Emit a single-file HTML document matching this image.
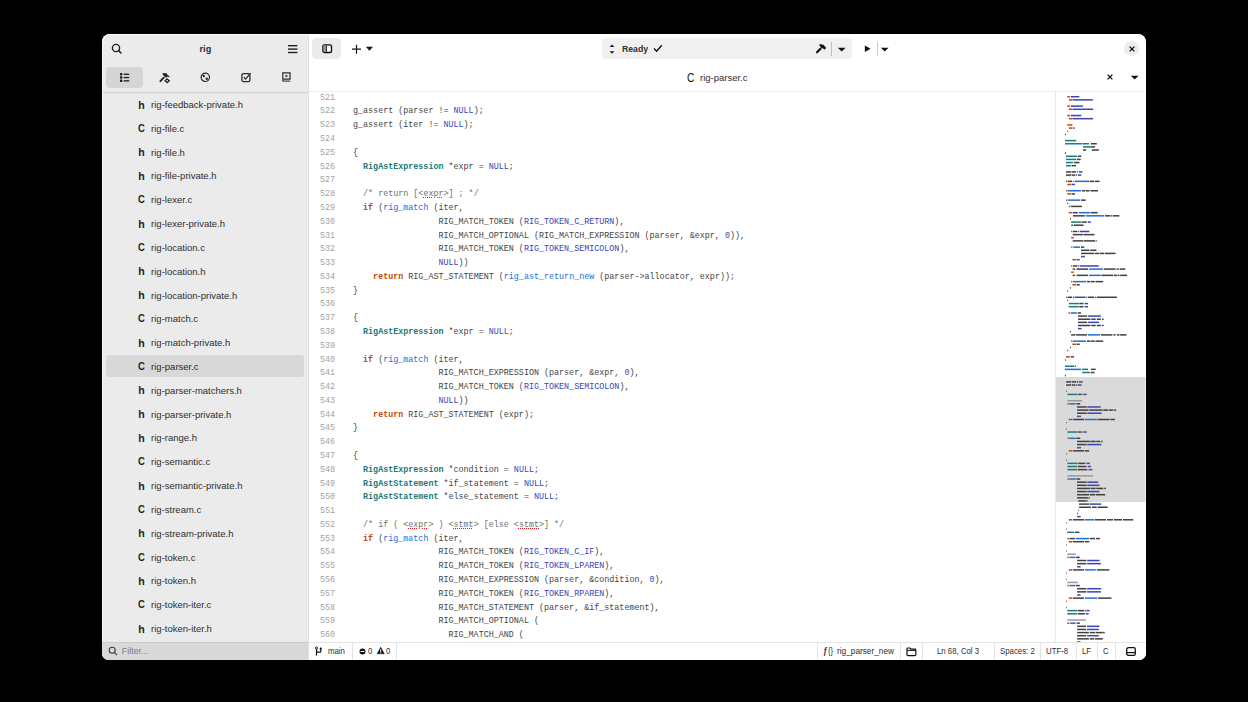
<!DOCTYPE html>
<html><head><meta charset="utf-8">
<style>
html,body{margin:0;padding:0;width:1248px;height:702px;background:#000;overflow:hidden;}
*{box-sizing:border-box;}
body{font-family:"Liberation Sans",sans-serif;color:#2e2e2e;}
#win{position:absolute;left:102px;top:34px;width:1044px;height:626px;background:#fff;border-radius:8px 8px 7px 7px;overflow:hidden;}
.abs{position:absolute;}
#side{position:absolute;left:0;top:0;width:205.5px;height:626px;background:#ebebeb;}
#sideborder{position:absolute;left:205.5px;top:0;width:1.5px;height:626px;background:#dedede;}
#hl{position:absolute;left:0;top:0;width:1044px;height:626px;border-radius:8px 8px 7px 7px;box-shadow:inset 0 1px 0 rgba(255,255,255,.95), inset 1px 0 0 rgba(255,255,255,.6), inset -1px 0 0 rgba(255,255,255,.6), inset 0 -1px 0 rgba(255,255,255,.6);pointer-events:none;}
.title{position:absolute;font-weight:bold;font-size:9.2px;}
.tabbtn{position:absolute;top:33px;width:37px;height:21px;border-radius:4px;}
.tabbtn.on{background:#d5d5d5;}
#sidesep{position:absolute;left:0;top:57.7px;width:205.5px;height:1.2px;background:#d3d3d3;box-shadow:0 1px 2px rgba(0,0,0,.03);}
.row{position:absolute;left:4px;width:198px;height:22px;border-radius:3px;}
.row.sel{background:#d8d8d8;}
.fi{position:absolute;left:32.2px;top:4.4px;font-size:10.6px;font-weight:bold;color:#1e1e1e;line-height:14px;}
.fi-c{font-size:11.8px;left:31.5px;top:3.9px;transform:scaleX(0.8);transform-origin:0 0;}
.fn{position:absolute;left:45.1px;top:4.8px;font-size:9.5px;line-height:14px;color:#2e2e2e;}
#filter{position:absolute;left:0;top:608px;width:206px;height:18px;background:#d9d9d9;border-top:1px solid #cbcbcb;z-index:2;}
#filter .ph{position:absolute;left:19.8px;top:2px;font-size:8.9px;color:#7e7e7e;line-height:12px;}
#main{position:absolute;left:207px;top:0;width:837px;height:626px;}
.btn{position:absolute;border-radius:4px;background:#ebebeb;}
#pill{position:absolute;left:500px;top:4px;width:250px;height:21px;border-radius:4px;background:#f0f0f0;}
#tabsep{position:absolute;left:207px;top:57.2px;width:837px;height:1.1px;background:#eeeeee;}
.ln{position:absolute;left:310px;width:25px;text-align:right;font-family:"Liberation Mono",monospace;font-size:8.33px;line-height:13.78px;height:13.78px;color:#a2a2a2;white-space:pre;}
.cl{position:absolute;left:353px;font-family:"Liberation Mono",monospace;font-size:8.4px;line-height:13.78px;height:13.78px;color:#454545;white-space:pre;}
.n{color:#3a44b4;}
.t{color:#1b7b7b;font-weight:bold;}
.k{color:#c14a0a;font-weight:bold;}
.f{color:#1c6fd6;}
.c{color:#6f6f6f;}
u{text-decoration:underline dotted #e01b24;text-underline-offset:1px;}
#code{position:absolute;left:0;top:0;width:1044px;height:626px;overflow:hidden;}
#minimap{position:absolute;left:952.6px;top:58px;width:91.4px;height:550px;border-left:1px solid #e8e8e8;}
#mmhl{position:absolute;left:953.6px;top:343.2px;width:90.4px;height:124.5px;background:#dadada;}
#status{position:absolute;left:207px;top:608px;width:837px;height:18px;border-top:1px solid #e3e3e3;background:#fff;}
.st{position:absolute;top:2.4px;font-size:9.2px;line-height:12px;transform:scaleX(0.85);transform-origin:0 0;color:#2e2e2e;white-space:nowrap;}
.vs{position:absolute;top:0px;width:1px;height:18px;background:#e3e3e3;}
</style></head><body>
<div id="win">
  <div id="side">
  </div>
  <div id="sideborder"></div>

  <!-- sidebar header -->
  <svg class="abs" style="left:8.8px;top:9px" width="12" height="12" viewBox="0 0 12 12"><circle cx="5" cy="5" r="3.6" fill="none" stroke="#1e1e1e" stroke-width="1.4"/><line x1="7.6" y1="7.6" x2="10" y2="10" stroke="#1e1e1e" stroke-width="1.5" stroke-linecap="round"/></svg>
  <div class="title" style="left:97.5px;top:10.2px">rig</div>
  <svg class="abs" style="left:186.4px;top:10.7px" width="10" height="9" viewBox="0 0 10 9"><rect x="0" y="0" width="9.4" height="1.4" fill="#1e1e1e"/><rect x="0" y="3.4" width="9.4" height="1.4" fill="#1e1e1e"/><rect x="0" y="6.8" width="9.4" height="1.4" fill="#1e1e1e"/></svg>

  <!-- sidebar tabs -->
  <div class="tabbtn on" style="left:3.6px"></div>
  <svg class="abs" style="left:17.6px;top:39.2px" width="10" height="10" viewBox="0 0 10 10"><rect x="0" y="0" width="2.3" height="2.4" rx="0.6" fill="#1e1e1e"/><rect x="0" y="3.3" width="2.3" height="2.4" rx="0.6" fill="#1e1e1e"/><rect x="0" y="6.6" width="2.3" height="2.4" rx="0.6" fill="#1e1e1e"/><rect x="3.6" y="0.6" width="5.6" height="1.3" fill="#1e1e1e"/><rect x="3.6" y="3.9" width="5.6" height="1.3" fill="#1e1e1e"/><rect x="3.6" y="7.2" width="5.6" height="1.3" fill="#1e1e1e"/></svg>
  <svg class="abs" style="left:53px;top:34px" width="20" height="20" viewBox="0 0 20 20"><path d="M5.4 13.2 L8.7 9.7" stroke="#262626" stroke-width="1.9" stroke-linecap="round"/><path d="M7.2 5.5 Q9.6 4.6 11.7 5.6 L12.9 7.3 L14.8 8.2 L14.3 9.1 L12.3 8.8 L10.7 9.7 L8.7 7.7 Z" fill="#262626"/><path d="M12.1 10.9 L14.3 12.7 L12.1 14.6 L10.1 12.7 Z" fill="none" stroke="#262626" stroke-width="1.3"/></svg>
  <svg class="abs" style="left:98px;top:37.8px" width="11" height="11" viewBox="0 0 11 11"><circle cx="5.3" cy="5.3" r="4.2" fill="none" stroke="#2a2a2a" stroke-width="1.2"/><circle cx="3.8" cy="4" r="1.2" fill="#2a2a2a"/><circle cx="6.8" cy="6.8" r="1.2" fill="#2a2a2a"/></svg>
  <svg class="abs" style="left:138.5px;top:37.6px" width="12" height="11" viewBox="0 0 12 11"><rect x="0.9" y="1.6" width="8" height="8" rx="1.6" fill="none" stroke="#2a2a2a" stroke-width="1.3"/><path d="M2.8 5.3 L4.6 7.1 L9.6 1.2" fill="none" stroke="#2a2a2a" stroke-width="1.3"/></svg>
  <svg class="abs" style="left:179.6px;top:38.4px" width="10" height="11" viewBox="0 0 10 11"><path d="M0.8 9.2 V0.8 H8 V7.2 H1.6" fill="none" stroke="#2a2a2a" stroke-width="1.2"/><rect x="0.8" y="8.6" width="7.4" height="1" fill="#2a2a2a"/><path d="M3.6 2.6 L6 4 L3.6 5.4 Z" fill="#2a2a2a"/></svg>
  <div id="sidesep"></div>

  <!-- file rows -->
  <div class="abs" style="left:0;top:-34px;width:205px;height:642px;overflow:hidden">
  <div class="abs" style="left:0;top:0;width:205px;height:642px">
<div class="row" style="top:93.20px"><span class="fi fi-h">h</span><span class="fn">rig-feedback-private.h</span></div>
<div class="row" style="top:117.02px"><span class="fi fi-c">C</span><span class="fn">rig-file.c</span></div>
<div class="row" style="top:140.84px"><span class="fi fi-h">h</span><span class="fn">rig-file.h</span></div>
<div class="row" style="top:164.66px"><span class="fi fi-h">h</span><span class="fn">rig-file-private.h</span></div>
<div class="row" style="top:188.48px"><span class="fi fi-c">C</span><span class="fn">rig-lexer.c</span></div>
<div class="row" style="top:212.30px"><span class="fi fi-h">h</span><span class="fn">rig-lexer-private.h</span></div>
<div class="row" style="top:236.12px"><span class="fi fi-c">C</span><span class="fn">rig-location.c</span></div>
<div class="row" style="top:259.94px"><span class="fi fi-h">h</span><span class="fn">rig-location.h</span></div>
<div class="row" style="top:283.76px"><span class="fi fi-h">h</span><span class="fn">rig-location-private.h</span></div>
<div class="row" style="top:307.58px"><span class="fi fi-c">C</span><span class="fn">rig-match.c</span></div>
<div class="row" style="top:331.40px"><span class="fi fi-h">h</span><span class="fn">rig-match-private.h</span></div>
<div class="row sel" style="top:355.22px"><span class="fi fi-c">C</span><span class="fn">rig-parser.c</span></div>
<div class="row" style="top:379.04px"><span class="fi fi-h">h</span><span class="fn">rig-parser-matchers.h</span></div>
<div class="row" style="top:402.86px"><span class="fi fi-h">h</span><span class="fn">rig-parser-private.h</span></div>
<div class="row" style="top:426.68px"><span class="fi fi-h">h</span><span class="fn">rig-range.h</span></div>
<div class="row" style="top:450.50px"><span class="fi fi-c">C</span><span class="fn">rig-semantic.c</span></div>
<div class="row" style="top:474.32px"><span class="fi fi-h">h</span><span class="fn">rig-semantic-private.h</span></div>
<div class="row" style="top:498.14px"><span class="fi fi-c">C</span><span class="fn">rig-stream.c</span></div>
<div class="row" style="top:521.96px"><span class="fi fi-h">h</span><span class="fn">rig-stream-private.h</span></div>
<div class="row" style="top:545.78px"><span class="fi fi-c">C</span><span class="fn">rig-token.c</span></div>
<div class="row" style="top:569.60px"><span class="fi fi-h">h</span><span class="fn">rig-token.h</span></div>
<div class="row" style="top:593.42px"><span class="fi fi-c">C</span><span class="fn">rig-token-iter.c</span></div>
<div class="row" style="top:617.24px"><span class="fi fi-h">h</span><span class="fn">rig-token-iter.h</span></div>
  </div>
  </div>

  <!-- filter -->
  <div id="filter">
    <svg class="abs" style="left:6.2px;top:3px" width="10" height="10" viewBox="0 0 10 10"><circle cx="4.2" cy="4.2" r="3" fill="none" stroke="#3a3a3a" stroke-width="1.1"/><line x1="6.3" y1="6.3" x2="8.6" y2="8.6" stroke="#3a3a3a" stroke-width="1.2" stroke-linecap="round"/></svg>
    <div class="ph">Filter...</div>
  </div>

  <!-- main header -->
  <div class="btn" style="left:209.9px;top:4.4px;width:29.6px;height:20.8px"></div>
  <svg class="abs" style="left:219.5px;top:10.2px" width="12" height="10" viewBox="0 0 12 10"><rect x="0.9" y="0.9" width="8.6" height="7.6" rx="1.5" fill="#fff" stroke="#111" stroke-width="1.4"/><rect x="1.6" y="1.6" width="2.4" height="6.2" fill="#999"/><rect x="3.9" y="1" width="0.9" height="7.4" fill="#111"/></svg>
  <svg class="abs" style="left:249.5px;top:9.5px" width="24" height="11" viewBox="0 0 24 11"><path d="M4.5 0.7 V9.7 M0 5.2 H9" stroke="#111" stroke-width="1.2"/><path d="M13.9 2.8 H21 L17.45 6.7 Z" fill="#111"/></svg>

  <div id="pill"></div>
  <svg class="abs" style="left:507px;top:9.5px" width="8" height="12" viewBox="0 0 8 12"><path d="M0.6 2.9 L3 0.4 L5.4 2.9 Z" fill="#1a1a1a"/><path d="M0.6 7.2 L3 9.7 L5.4 7.2 Z" fill="#1a1a1a"/></svg>
  <div class="title" style="left:520px;top:10.2px;font-size:8.7px">Ready</div>
  <svg class="abs" style="left:551px;top:10px" width="10" height="9" viewBox="0 0 10 9"><path d="M1 4.6 L3.6 7.3 L8.8 1.2" fill="none" stroke="#111" stroke-width="1.4"/></svg>
  <svg class="abs" style="left:710px;top:6px" width="20" height="18" viewBox="0 0 20 18"><path d="M5 12.3 L8.5 8.8" stroke="#111" stroke-width="2.1" stroke-linecap="round"/><path d="M7 4.6 Q9.6 3.6 11.9 5.3 L13.9 7.4 L13.4 9.2 L12.2 9.5 L11.2 8.4 L9.5 8.1 L8.5 7.2 Z" fill="#111"/></svg>
  <div class="abs" style="left:729px;top:8px;width:1px;height:13.5px;background:#bdbdbd"></div>
  <svg class="abs" style="left:735px;top:12.5px" width="10" height="6" viewBox="0 0 10 6"><path d="M0.8 0.8 H8.6 L4.7 4.6 Z" fill="#111"/></svg>
  <svg class="abs" style="left:761.5px;top:10.8px" width="8" height="8" viewBox="0 0 8 8"><path d="M0.8 0.6 L6.6 3.8 L0.8 7 Z" fill="#111"/></svg>
  <div class="abs" style="left:774.5px;top:8px;width:1px;height:13.5px;background:#c8c8c8"></div>
  <svg class="abs" style="left:778px;top:12.5px" width="10" height="6" viewBox="0 0 10 6"><path d="M0.8 0.8 H8.6 L4.7 4.6 Z" fill="#111"/></svg>

  <!-- close window -->
  <div class="abs" style="left:1022.2px;top:7.4px;width:14.4px;height:14.4px;border-radius:50%;background:#ececec"></div>
  <svg class="abs" style="left:1026.5px;top:11.7px" width="6" height="6" viewBox="0 0 6 6"><path d="M0.6 0.6 L5.4 5.4 M5.4 0.6 L0.6 5.4" stroke="#111" stroke-width="1.3"/></svg>

  <!-- tab -->
  <div class="abs" style="left:585px;top:36.6px;font-size:12.2px;color:#111;line-height:14px;transform:scaleX(0.84);transform-origin:0 0">C</div>
  <div class="abs" style="left:598px;top:36.5px;font-size:9.5px;color:#2e2e2e;line-height:14px">rig-parser.c</div>
  <svg class="abs" style="left:1005.2px;top:40.3px" width="6" height="6" viewBox="0 0 6 6"><path d="M0.6 0.6 L5.4 5.4 M5.4 0.6 L0.6 5.4" stroke="#111" stroke-width="1.3"/></svg>
  <svg class="abs" style="left:1028px;top:41px" width="10" height="6" viewBox="0 0 10 6"><path d="M0.8 0.8 H8.6 L4.7 4.6 Z" fill="#111"/></svg>
  <div id="tabsep"></div>

  <div id="mmhl"></div>
  <div id="minimap"><svg width="90" height="550" viewBox="0 0 90 550" style="position:absolute;left:0.4px;top:0"><rect x="11.28" y="3.99" width="2.56" height="1.5" fill="#c64600"/><rect x="14.74" y="3.99" width="8.59" height="1.5" fill="#3b45b5"/><rect x="12.82" y="7.12" width="3.85" height="1.5" fill="#c64600"/><rect x="17.05" y="7.12" width="19.87" height="1.5" fill="#3b45b5"/><rect x="11.28" y="13.39" width="2.56" height="1.5" fill="#c64600"/><rect x="14.74" y="13.39" width="12.18" height="1.5" fill="#3b45b5"/><rect x="12.82" y="16.52" width="3.85" height="1.5" fill="#c64600"/><rect x="17.05" y="16.52" width="20.13" height="1.5" fill="#3b45b5"/><rect x="11.28" y="22.79" width="2.56" height="1.5" fill="#c64600"/><rect x="14.74" y="22.79" width="10.51" height="1.5" fill="#3b45b5"/><rect x="12.82" y="25.93" width="3.85" height="1.5" fill="#c64600"/><rect x="17.05" y="25.93" width="20.13" height="1.5" fill="#3b45b5"/><rect x="11.28" y="32.19" width="5.13" height="1.5" fill="#c64600"/><rect x="12.82" y="35.33" width="3.59" height="1.5" fill="#c64600"/><rect x="17.05" y="35.33" width="1.54" height="1.5" fill="#3b45b5"/><rect x="11.28" y="38.46" width="0.90" height="1.5" fill="#404040"/><rect x="8.97" y="41.59" width="1.03" height="1.5" fill="#404040"/><rect x="8.97" y="47.86" width="10.26" height="1.5" fill="#1b7b7b"/><rect x="19.23" y="47.86" width="1.03" height="1.5" fill="#404040"/><rect x="8.97" y="50.99" width="17.31" height="1.5" fill="#1c71d8"/><rect x="26.67" y="50.99" width="6.41" height="1.5" fill="#1b7b7b"/><rect x="34.87" y="50.99" width="5.90" height="1.5" fill="#404040"/><rect x="26.92" y="54.13" width="7.69" height="1.5" fill="#1b7b7b"/><rect x="34.62" y="54.13" width="4.49" height="1.5" fill="#404040"/><rect x="26.92" y="57.26" width="3.21" height="1.5" fill="#404040"/><rect x="35.90" y="57.26" width="7.05" height="1.5" fill="#404040"/><rect x="8.97" y="60.39" width="1.03" height="1.5" fill="#404040"/><rect x="10.00" y="63.53" width="11.15" height="1.5" fill="#1b7b7b"/><rect x="21.79" y="63.53" width="3.59" height="1.5" fill="#404040"/><rect x="10.00" y="66.66" width="10.13" height="1.5" fill="#1b7b7b"/><rect x="20.77" y="66.66" width="3.97" height="1.5" fill="#404040"/><rect x="10.00" y="69.80" width="7.05" height="1.5" fill="#1b7b7b"/><rect x="17.95" y="69.80" width="5.51" height="1.5" fill="#404040"/><rect x="10.00" y="72.93" width="5.13" height="1.5" fill="#1b7b7b"/><rect x="15.77" y="72.93" width="4.10" height="1.5" fill="#404040"/><rect x="10.00" y="79.20" width="5.13" height="1.5" fill="#404040"/><rect x="15.64" y="79.20" width="4.23" height="1.5" fill="#404040"/><rect x="20.77" y="79.20" width="1.03" height="1.5" fill="#404040"/><rect x="22.82" y="79.20" width="3.72" height="1.5" fill="#3b45b5"/><rect x="10.00" y="82.33" width="5.13" height="1.5" fill="#404040"/><rect x="15.64" y="82.33" width="3.59" height="1.5" fill="#404040"/><rect x="19.87" y="82.33" width="1.03" height="1.5" fill="#404040"/><rect x="21.79" y="82.33" width="3.46" height="1.5" fill="#3b45b5"/><rect x="10.00" y="88.60" width="1.28" height="1.5" fill="#c64600"/><rect x="11.79" y="88.60" width="4.23" height="1.5" fill="#404040"/><rect x="17.31" y="88.60" width="0.64" height="1.5" fill="#404040"/><rect x="18.59" y="88.60" width="14.49" height="1.5" fill="#1c71d8"/><rect x="33.59" y="88.60" width="4.62" height="1.5" fill="#404040"/><rect x="38.85" y="88.60" width="4.74" height="1.5" fill="#404040"/><rect x="11.28" y="91.73" width="3.85" height="1.5" fill="#c64600"/><rect x="15.64" y="91.73" width="3.33" height="1.5" fill="#3b45b5"/><rect x="10.00" y="98.00" width="1.28" height="1.5" fill="#c64600"/><rect x="11.79" y="98.00" width="13.21" height="1.5" fill="#1c71d8"/><rect x="25.90" y="98.00" width="3.33" height="1.5" fill="#404040"/><rect x="29.74" y="98.00" width="3.85" height="1.5" fill="#404040"/><rect x="34.62" y="98.00" width="7.44" height="1.5" fill="#404040"/><rect x="11.28" y="101.13" width="3.85" height="1.5" fill="#c64600"/><rect x="15.64" y="101.13" width="3.33" height="1.5" fill="#404040"/><rect x="10.00" y="107.40" width="1.28" height="1.5" fill="#c64600"/><rect x="11.79" y="107.40" width="12.31" height="1.5" fill="#1c71d8"/><rect x="25.00" y="107.40" width="4.74" height="1.5" fill="#404040"/><rect x="11.28" y="110.53" width="0.90" height="1.5" fill="#404040"/><rect x="12.82" y="113.67" width="1.54" height="1.5" fill="#1b7b7b"/><rect x="15.13" y="113.67" width="10.77" height="1.5" fill="#404040"/><rect x="12.82" y="119.93" width="3.21" height="1.5" fill="#c64600"/><rect x="16.67" y="119.93" width="5.13" height="1.5" fill="#404040"/><rect x="22.82" y="119.93" width="11.15" height="1.5" fill="#1c71d8"/><rect x="34.62" y="119.93" width="7.05" height="1.5" fill="#404040"/><rect x="17.05" y="123.07" width="11.79" height="1.5" fill="#404040"/><rect x="29.74" y="123.07" width="18.33" height="1.5" fill="#1c71d8"/><rect x="48.97" y="123.07" width="5.51" height="1.5" fill="#404040"/><rect x="55.13" y="123.07" width="1.28" height="1.5" fill="#404040"/><rect x="57.05" y="123.07" width="6.41" height="1.5" fill="#404040"/><rect x="14.10" y="126.20" width="0.90" height="1.5" fill="#404040"/><rect x="15.13" y="129.33" width="9.87" height="1.5" fill="#1b7b7b"/><rect x="25.64" y="129.33" width="5.13" height="1.5" fill="#404040"/><rect x="31.79" y="129.33" width="3.08" height="1.5" fill="#3b45b5"/><rect x="15.13" y="132.47" width="1.92" height="1.5" fill="#1b7b7b"/><rect x="17.69" y="132.47" width="9.87" height="1.5" fill="#404040"/><rect x="15.13" y="138.73" width="1.28" height="1.5" fill="#c64600"/><rect x="16.92" y="138.73" width="4.23" height="1.5" fill="#404040"/><rect x="21.79" y="138.73" width="1.03" height="1.5" fill="#404040"/><rect x="23.72" y="138.73" width="9.62" height="1.5" fill="#3b45b5"/><rect x="16.67" y="141.87" width="10.26" height="1.5" fill="#404040"/><rect x="27.56" y="141.87" width="10.90" height="1.5" fill="#404040"/><rect x="15.13" y="145.00" width="2.56" height="1.5" fill="#c64600"/><rect x="16.67" y="148.14" width="10.26" height="1.5" fill="#404040"/><rect x="27.56" y="148.14" width="11.54" height="1.5" fill="#404040"/><rect x="39.74" y="148.14" width="1.03" height="1.5" fill="#3b45b5"/><rect x="15.13" y="154.40" width="1.28" height="1.5" fill="#c64600"/><rect x="17.31" y="154.40" width="6.79" height="1.5" fill="#1c71d8"/><rect x="25.00" y="154.40" width="3.21" height="1.5" fill="#404040"/><rect x="25.00" y="157.54" width="8.59" height="1.5" fill="#404040"/><rect x="34.36" y="157.54" width="6.03" height="1.5" fill="#404040"/><rect x="25.00" y="160.67" width="13.46" height="1.5" fill="#404040"/><rect x="39.10" y="160.67" width="3.85" height="1.5" fill="#404040"/><rect x="43.59" y="160.67" width="4.49" height="1.5" fill="#404040"/><rect x="48.72" y="160.67" width="10.90" height="1.5" fill="#404040"/><rect x="25.00" y="163.80" width="3.85" height="1.5" fill="#3b45b5"/><rect x="16.41" y="166.94" width="3.85" height="1.5" fill="#c64600"/><rect x="20.77" y="166.94" width="2.95" height="1.5" fill="#3b45b5"/><rect x="15.13" y="173.20" width="1.28" height="1.5" fill="#c64600"/><rect x="17.05" y="173.20" width="4.10" height="1.5" fill="#404040"/><rect x="21.79" y="173.20" width="1.03" height="1.5" fill="#404040"/><rect x="23.72" y="173.20" width="18.97" height="1.5" fill="#3b45b5"/><rect x="16.67" y="176.34" width="2.56" height="1.5" fill="#404040"/><rect x="20.51" y="176.34" width="11.54" height="1.5" fill="#404040"/><rect x="33.08" y="176.34" width="14.10" height="1.5" fill="#1c71d8"/><rect x="48.08" y="176.34" width="11.54" height="1.5" fill="#404040"/><rect x="60.64" y="176.34" width="2.18" height="1.5" fill="#404040"/><rect x="63.72" y="176.34" width="5.51" height="1.5" fill="#404040"/><rect x="15.13" y="179.47" width="2.56" height="1.5" fill="#c64600"/><rect x="16.67" y="182.61" width="2.31" height="1.5" fill="#404040"/><rect x="20.51" y="182.61" width="11.54" height="1.5" fill="#404040"/><rect x="33.08" y="182.61" width="11.79" height="1.5" fill="#1c71d8"/><rect x="45.51" y="182.61" width="11.54" height="1.5" fill="#404040"/><rect x="57.69" y="182.61" width="3.21" height="1.5" fill="#404040"/><rect x="61.54" y="182.61" width="1.92" height="1.5" fill="#404040"/><rect x="64.10" y="182.61" width="7.05" height="1.5" fill="#404040"/><rect x="15.13" y="188.87" width="1.28" height="1.5" fill="#c64600"/><rect x="17.05" y="188.87" width="13.08" height="1.5" fill="#1c71d8"/><rect x="31.03" y="188.87" width="3.33" height="1.5" fill="#404040"/><rect x="34.87" y="188.87" width="3.85" height="1.5" fill="#404040"/><rect x="39.49" y="188.87" width="7.69" height="1.5" fill="#404040"/><rect x="16.41" y="192.01" width="3.85" height="1.5" fill="#c64600"/><rect x="20.90" y="192.01" width="2.82" height="1.5" fill="#404040"/><rect x="14.10" y="195.14" width="0.90" height="1.5" fill="#404040"/><rect x="11.28" y="198.27" width="0.90" height="1.5" fill="#404040"/><rect x="10.00" y="204.54" width="1.28" height="1.5" fill="#c64600"/><rect x="11.79" y="204.54" width="4.23" height="1.5" fill="#404040"/><rect x="17.05" y="204.54" width="0.90" height="1.5" fill="#404040"/><rect x="18.59" y="204.54" width="10.64" height="1.5" fill="#3b45b5"/><rect x="29.74" y="204.54" width="1.03" height="1.5" fill="#404040"/><rect x="31.79" y="204.54" width="6.41" height="1.5" fill="#404040"/><rect x="38.85" y="204.54" width="0.90" height="1.5" fill="#404040"/><rect x="40.77" y="204.54" width="20.13" height="1.5" fill="#404040"/><rect x="11.28" y="207.67" width="0.90" height="1.5" fill="#404040"/><rect x="12.82" y="210.81" width="10.00" height="1.5" fill="#1b7b7b"/><rect x="23.33" y="210.81" width="3.85" height="1.5" fill="#404040"/><rect x="27.56" y="210.81" width="0.64" height="1.5" fill="#404040"/><rect x="28.85" y="210.81" width="3.21" height="1.5" fill="#3b45b5"/><rect x="12.82" y="213.94" width="10.00" height="1.5" fill="#1b7b7b"/><rect x="23.33" y="213.94" width="3.85" height="1.5" fill="#404040"/><rect x="27.56" y="213.94" width="0.64" height="1.5" fill="#404040"/><rect x="28.85" y="213.94" width="3.21" height="1.5" fill="#3b45b5"/><rect x="12.56" y="220.21" width="1.54" height="1.5" fill="#c64600"/><rect x="14.74" y="220.21" width="6.15" height="1.5" fill="#1c71d8"/><rect x="21.79" y="220.21" width="3.21" height="1.5" fill="#404040"/><rect x="22.05" y="223.34" width="9.10" height="1.5" fill="#404040"/><rect x="32.05" y="223.34" width="12.82" height="1.5" fill="#3b45b5"/><rect x="22.05" y="226.48" width="12.31" height="1.5" fill="#404040"/><rect x="35.26" y="226.48" width="4.49" height="1.5" fill="#404040"/><rect x="40.77" y="226.48" width="4.10" height="1.5" fill="#404040"/><rect x="45.90" y="226.48" width="1.79" height="1.5" fill="#3b45b5"/><rect x="22.05" y="229.61" width="9.10" height="1.5" fill="#404040"/><rect x="32.05" y="229.61" width="10.90" height="1.5" fill="#3b45b5"/><rect x="22.05" y="232.74" width="12.31" height="1.5" fill="#404040"/><rect x="35.26" y="232.74" width="4.49" height="1.5" fill="#404040"/><rect x="40.77" y="232.74" width="4.10" height="1.5" fill="#404040"/><rect x="45.90" y="232.74" width="1.79" height="1.5" fill="#3b45b5"/><rect x="22.05" y="235.88" width="3.59" height="1.5" fill="#3b45b5"/><rect x="14.10" y="239.01" width="0.90" height="1.5" fill="#404040"/><rect x="15.13" y="242.14" width="4.10" height="1.5" fill="#404040"/><rect x="19.87" y="242.14" width="11.28" height="1.5" fill="#404040"/><rect x="32.05" y="242.14" width="11.92" height="1.5" fill="#1c71d8"/><rect x="44.87" y="242.14" width="11.54" height="1.5" fill="#404040"/><rect x="57.44" y="242.14" width="2.18" height="1.5" fill="#404040"/><rect x="60.90" y="242.14" width="2.56" height="1.5" fill="#404040"/><rect x="64.10" y="242.14" width="6.41" height="1.5" fill="#404040"/><rect x="15.13" y="248.41" width="1.28" height="1.5" fill="#c64600"/><rect x="17.05" y="248.41" width="13.08" height="1.5" fill="#1c71d8"/><rect x="31.03" y="248.41" width="3.33" height="1.5" fill="#404040"/><rect x="34.87" y="248.41" width="3.85" height="1.5" fill="#404040"/><rect x="39.49" y="248.41" width="7.69" height="1.5" fill="#404040"/><rect x="16.41" y="251.54" width="3.85" height="1.5" fill="#c64600"/><rect x="20.90" y="251.54" width="2.82" height="1.5" fill="#404040"/><rect x="14.10" y="254.68" width="0.90" height="1.5" fill="#404040"/><rect x="11.28" y="257.81" width="0.90" height="1.5" fill="#404040"/><rect x="10.00" y="264.08" width="3.85" height="1.5" fill="#c64600"/><rect x="14.74" y="264.08" width="3.21" height="1.5" fill="#404040"/><rect x="8.97" y="267.21" width="1.03" height="1.5" fill="#404040"/><rect x="8.97" y="273.48" width="9.36" height="1.5" fill="#1b7b7b"/><rect x="18.97" y="273.48" width="0.90" height="1.5" fill="#404040"/><rect x="8.97" y="276.61" width="16.03" height="1.5" fill="#1c71d8"/><rect x="25.90" y="276.61" width="6.15" height="1.5" fill="#1b7b7b"/><rect x="34.87" y="276.61" width="4.87" height="1.5" fill="#404040"/><rect x="26.28" y="279.75" width="7.69" height="1.5" fill="#1b7b7b"/><rect x="34.62" y="279.75" width="3.85" height="1.5" fill="#404040"/><rect x="8.97" y="282.88" width="1.03" height="1.5" fill="#404040"/><rect x="10.13" y="289.15" width="5.13" height="1.5" fill="#404040"/><rect x="15.90" y="289.15" width="4.49" height="1.5" fill="#404040"/><rect x="21.03" y="289.15" width="1.28" height="1.5" fill="#404040"/><rect x="22.95" y="289.15" width="2.56" height="1.5" fill="#3b45b5"/><rect x="25.51" y="289.15" width="1.28" height="1.5" fill="#404040"/><rect x="10.13" y="292.28" width="5.13" height="1.5" fill="#404040"/><rect x="15.90" y="292.28" width="3.21" height="1.5" fill="#404040"/><rect x="19.74" y="292.28" width="1.28" height="1.5" fill="#404040"/><rect x="21.67" y="292.28" width="2.56" height="1.5" fill="#3b45b5"/><rect x="24.23" y="292.28" width="1.28" height="1.5" fill="#404040"/><rect x="10.13" y="298.55" width="0.64" height="1.5" fill="#404040"/><rect x="11.41" y="301.68" width="10.26" height="1.5" fill="#1b7b7b"/><rect x="22.31" y="301.68" width="3.21" height="1.5" fill="#404040"/><rect x="26.15" y="301.68" width="0.64" height="1.5" fill="#404040"/><rect x="27.44" y="301.68" width="2.56" height="1.5" fill="#3b45b5"/><rect x="30.00" y="301.68" width="0.64" height="1.5" fill="#404040"/><rect x="11.41" y="307.95" width="14.74" height="1.5" fill="#9a9a9a"/><rect x="11.41" y="311.08" width="1.28" height="1.5" fill="#c64600"/><rect x="13.33" y="311.08" width="0.64" height="1.5" fill="#404040"/><rect x="13.97" y="311.08" width="5.77" height="1.5" fill="#1c71d8"/><rect x="20.38" y="311.08" width="3.85" height="1.5" fill="#404040"/><rect x="21.03" y="314.22" width="9.62" height="1.5" fill="#404040"/><rect x="31.28" y="314.22" width="0.64" height="1.5" fill="#404040"/><rect x="31.92" y="314.22" width="11.54" height="1.5" fill="#3b45b5"/><rect x="43.46" y="314.22" width="1.28" height="1.5" fill="#404040"/><rect x="21.03" y="317.35" width="11.54" height="1.5" fill="#404040"/><rect x="33.21" y="317.35" width="13.46" height="1.5" fill="#404040"/><rect x="47.31" y="317.35" width="5.13" height="1.5" fill="#404040"/><rect x="53.08" y="317.35" width="3.85" height="1.5" fill="#404040"/><rect x="57.56" y="317.35" width="0.64" height="1.5" fill="#3b45b5"/><rect x="58.21" y="317.35" width="1.92" height="1.5" fill="#404040"/><rect x="21.03" y="320.48" width="9.62" height="1.5" fill="#404040"/><rect x="31.28" y="320.48" width="0.64" height="1.5" fill="#404040"/><rect x="31.92" y="320.48" width="12.18" height="1.5" fill="#3b45b5"/><rect x="44.10" y="320.48" width="1.28" height="1.5" fill="#404040"/><rect x="21.03" y="323.62" width="2.56" height="1.5" fill="#3b45b5"/><rect x="23.59" y="323.62" width="1.28" height="1.5" fill="#404040"/><rect x="12.69" y="326.75" width="3.85" height="1.5" fill="#c64600"/><rect x="17.18" y="326.75" width="10.90" height="1.5" fill="#404040"/><rect x="28.72" y="326.75" width="0.64" height="1.5" fill="#404040"/><rect x="29.36" y="326.75" width="11.54" height="1.5" fill="#1c71d8"/><rect x="41.54" y="326.75" width="12.18" height="1.5" fill="#404040"/><rect x="54.36" y="326.75" width="4.49" height="1.5" fill="#404040"/><rect x="10.13" y="329.88" width="0.64" height="1.5" fill="#404040"/><rect x="10.13" y="336.15" width="0.64" height="1.5" fill="#404040"/><rect x="11.41" y="339.29" width="10.26" height="1.5" fill="#1b7b7b"/><rect x="22.31" y="339.29" width="3.21" height="1.5" fill="#404040"/><rect x="26.15" y="339.29" width="0.64" height="1.5" fill="#404040"/><rect x="27.44" y="339.29" width="2.56" height="1.5" fill="#3b45b5"/><rect x="30.00" y="339.29" width="0.64" height="1.5" fill="#404040"/><rect x="11.41" y="345.55" width="1.28" height="1.5" fill="#c64600"/><rect x="13.33" y="345.55" width="0.64" height="1.5" fill="#404040"/><rect x="13.97" y="345.55" width="5.77" height="1.5" fill="#1c71d8"/><rect x="20.38" y="345.55" width="3.85" height="1.5" fill="#404040"/><rect x="21.03" y="348.69" width="12.82" height="1.5" fill="#404040"/><rect x="34.49" y="348.69" width="5.13" height="1.5" fill="#404040"/><rect x="40.26" y="348.69" width="3.85" height="1.5" fill="#404040"/><rect x="44.74" y="348.69" width="0.64" height="1.5" fill="#3b45b5"/><rect x="45.38" y="348.69" width="1.28" height="1.5" fill="#404040"/><rect x="21.03" y="351.82" width="9.62" height="1.5" fill="#404040"/><rect x="31.28" y="351.82" width="0.64" height="1.5" fill="#404040"/><rect x="31.92" y="351.82" width="12.18" height="1.5" fill="#3b45b5"/><rect x="44.10" y="351.82" width="1.28" height="1.5" fill="#404040"/><rect x="21.03" y="354.95" width="2.56" height="1.5" fill="#3b45b5"/><rect x="23.59" y="354.95" width="1.28" height="1.5" fill="#404040"/><rect x="12.69" y="358.09" width="3.85" height="1.5" fill="#c64600"/><rect x="17.18" y="358.09" width="10.90" height="1.5" fill="#404040"/><rect x="28.72" y="358.09" width="4.49" height="1.5" fill="#404040"/><rect x="10.13" y="361.22" width="0.64" height="1.5" fill="#404040"/><rect x="10.13" y="367.49" width="0.64" height="1.5" fill="#404040"/><rect x="11.41" y="370.62" width="10.26" height="1.5" fill="#1b7b7b"/><rect x="22.31" y="370.62" width="6.41" height="1.5" fill="#404040"/><rect x="29.36" y="370.62" width="0.64" height="1.5" fill="#404040"/><rect x="30.64" y="370.62" width="2.56" height="1.5" fill="#3b45b5"/><rect x="33.21" y="370.62" width="0.64" height="1.5" fill="#404040"/><rect x="11.41" y="373.75" width="9.62" height="1.5" fill="#1b7b7b"/><rect x="21.67" y="373.75" width="8.33" height="1.5" fill="#404040"/><rect x="30.64" y="373.75" width="0.64" height="1.5" fill="#404040"/><rect x="31.92" y="373.75" width="2.56" height="1.5" fill="#3b45b5"/><rect x="34.49" y="373.75" width="0.64" height="1.5" fill="#404040"/><rect x="11.41" y="376.89" width="9.62" height="1.5" fill="#1b7b7b"/><rect x="21.67" y="376.89" width="9.62" height="1.5" fill="#404040"/><rect x="31.92" y="376.89" width="0.64" height="1.5" fill="#404040"/><rect x="33.21" y="376.89" width="2.56" height="1.5" fill="#3b45b5"/><rect x="35.77" y="376.89" width="0.64" height="1.5" fill="#404040"/><rect x="11.41" y="383.16" width="25.64" height="1.5" fill="#9a9a9a"/><rect x="11.41" y="386.29" width="1.28" height="1.5" fill="#c64600"/><rect x="13.33" y="386.29" width="0.64" height="1.5" fill="#404040"/><rect x="13.97" y="386.29" width="5.77" height="1.5" fill="#1c71d8"/><rect x="20.38" y="386.29" width="3.85" height="1.5" fill="#404040"/><rect x="21.03" y="389.42" width="9.62" height="1.5" fill="#404040"/><rect x="31.28" y="389.42" width="0.64" height="1.5" fill="#404040"/><rect x="31.92" y="389.42" width="8.97" height="1.5" fill="#3b45b5"/><rect x="40.90" y="389.42" width="1.28" height="1.5" fill="#404040"/><rect x="21.03" y="392.56" width="9.62" height="1.5" fill="#404040"/><rect x="31.28" y="392.56" width="0.64" height="1.5" fill="#404040"/><rect x="31.92" y="392.56" width="10.26" height="1.5" fill="#3b45b5"/><rect x="42.18" y="392.56" width="1.28" height="1.5" fill="#404040"/><rect x="21.03" y="395.69" width="12.82" height="1.5" fill="#404040"/><rect x="34.49" y="395.69" width="5.13" height="1.5" fill="#404040"/><rect x="40.26" y="395.69" width="7.05" height="1.5" fill="#404040"/><rect x="47.95" y="395.69" width="0.64" height="1.5" fill="#3b45b5"/><rect x="48.59" y="395.69" width="1.28" height="1.5" fill="#404040"/><rect x="21.03" y="398.82" width="9.62" height="1.5" fill="#404040"/><rect x="31.28" y="398.82" width="0.64" height="1.5" fill="#404040"/><rect x="31.92" y="398.82" width="10.26" height="1.5" fill="#3b45b5"/><rect x="42.18" y="398.82" width="1.28" height="1.5" fill="#404040"/><rect x="21.03" y="401.96" width="12.18" height="1.5" fill="#404040"/><rect x="33.85" y="401.96" width="5.13" height="1.5" fill="#404040"/><rect x="39.62" y="401.96" width="9.62" height="1.5" fill="#404040"/><rect x="21.03" y="405.09" width="11.54" height="1.5" fill="#404040"/><rect x="33.21" y="405.09" width="0.64" height="1.5" fill="#404040"/><rect x="22.31" y="408.22" width="8.33" height="1.5" fill="#404040"/><rect x="31.28" y="408.22" width="0.64" height="1.5" fill="#404040"/><rect x="23.08" y="411.36" width="10.26" height="1.5" fill="#404040"/><rect x="33.97" y="411.36" width="11.15" height="1.5" fill="#3b45b5"/><rect x="23.08" y="414.49" width="11.79" height="1.5" fill="#404040"/><rect x="35.90" y="414.49" width="4.87" height="1.5" fill="#404040"/><rect x="41.67" y="414.49" width="10.00" height="1.5" fill="#404040"/><rect x="22.18" y="417.63" width="0.64" height="1.5" fill="#404040"/><rect x="21.15" y="420.76" width="0.90" height="1.5" fill="#404040"/><rect x="21.15" y="423.89" width="3.46" height="1.5" fill="#3b45b5"/><rect x="12.82" y="427.03" width="3.59" height="1.5" fill="#c64600"/><rect x="17.05" y="427.03" width="11.15" height="1.5" fill="#404040"/><rect x="28.85" y="427.03" width="9.36" height="1.5" fill="#1c71d8"/><rect x="38.85" y="427.03" width="11.15" height="1.5" fill="#404040"/><rect x="51.03" y="427.03" width="6.03" height="1.5" fill="#404040"/><rect x="57.95" y="427.03" width="8.08" height="1.5" fill="#404040"/><rect x="66.92" y="427.03" width="10.26" height="1.5" fill="#404040"/><rect x="10.26" y="430.16" width="0.64" height="1.5" fill="#404040"/><rect x="10.26" y="436.43" width="0.64" height="1.5" fill="#404040"/><rect x="11.28" y="439.56" width="6.92" height="1.5" fill="#1b7b7b"/><rect x="18.97" y="439.56" width="4.49" height="1.5" fill="#404040"/><rect x="11.28" y="445.83" width="1.54" height="1.5" fill="#c64600"/><rect x="13.46" y="445.83" width="5.77" height="1.5" fill="#404040"/><rect x="19.87" y="445.83" width="13.46" height="1.5" fill="#1c71d8"/><rect x="33.97" y="445.83" width="5.13" height="1.5" fill="#404040"/><rect x="40.00" y="445.83" width="3.97" height="1.5" fill="#404040"/><rect x="12.82" y="448.96" width="3.59" height="1.5" fill="#c64600"/><rect x="17.05" y="448.96" width="10.90" height="1.5" fill="#404040"/><rect x="28.85" y="448.96" width="4.49" height="1.5" fill="#404040"/><rect x="10.26" y="452.09" width="0.64" height="1.5" fill="#404040"/><rect x="10.26" y="458.36" width="0.64" height="1.5" fill="#404040"/><rect x="11.28" y="461.50" width="8.59" height="1.5" fill="#9a9a9a"/><rect x="11.28" y="464.63" width="1.54" height="1.5" fill="#c64600"/><rect x="13.46" y="464.63" width="5.77" height="1.5" fill="#1c71d8"/><rect x="19.87" y="464.63" width="3.85" height="1.5" fill="#404040"/><rect x="21.15" y="467.76" width="9.23" height="1.5" fill="#404040"/><rect x="31.15" y="467.76" width="12.44" height="1.5" fill="#3b45b5"/><rect x="21.15" y="470.90" width="9.23" height="1.5" fill="#404040"/><rect x="31.15" y="470.90" width="13.72" height="1.5" fill="#3b45b5"/><rect x="21.15" y="474.03" width="3.46" height="1.5" fill="#3b45b5"/><rect x="12.82" y="477.16" width="3.59" height="1.5" fill="#c64600"/><rect x="17.05" y="477.16" width="10.90" height="1.5" fill="#404040"/><rect x="28.85" y="477.16" width="10.90" height="1.5" fill="#1c71d8"/><rect x="40.77" y="477.16" width="12.44" height="1.5" fill="#404040"/><rect x="10.26" y="480.30" width="0.64" height="1.5" fill="#404040"/><rect x="10.26" y="486.56" width="0.64" height="1.5" fill="#404040"/><rect x="11.28" y="489.70" width="10.51" height="1.5" fill="#9a9a9a"/><rect x="11.28" y="492.83" width="1.54" height="1.5" fill="#c64600"/><rect x="13.46" y="492.83" width="5.77" height="1.5" fill="#1c71d8"/><rect x="19.87" y="492.83" width="3.85" height="1.5" fill="#404040"/><rect x="21.15" y="495.97" width="9.23" height="1.5" fill="#404040"/><rect x="31.15" y="495.97" width="13.97" height="1.5" fill="#3b45b5"/><rect x="21.15" y="499.10" width="9.23" height="1.5" fill="#404040"/><rect x="31.15" y="499.10" width="13.72" height="1.5" fill="#3b45b5"/><rect x="21.15" y="502.23" width="3.46" height="1.5" fill="#3b45b5"/><rect x="12.82" y="505.37" width="3.59" height="1.5" fill="#c64600"/><rect x="17.05" y="505.37" width="10.90" height="1.5" fill="#404040"/><rect x="28.85" y="505.37" width="12.44" height="1.5" fill="#1c71d8"/><rect x="42.05" y="505.37" width="13.33" height="1.5" fill="#404040"/><rect x="10.26" y="508.50" width="0.64" height="1.5" fill="#404040"/><rect x="10.26" y="514.77" width="0.64" height="1.5" fill="#404040"/><rect x="11.28" y="517.90" width="9.87" height="1.5" fill="#1b7b7b"/><rect x="21.79" y="517.90" width="6.41" height="1.5" fill="#404040"/><rect x="28.85" y="517.90" width="0.90" height="1.5" fill="#404040"/><rect x="30.38" y="517.90" width="3.21" height="1.5" fill="#3b45b5"/><rect x="11.28" y="521.03" width="9.87" height="1.5" fill="#1b7b7b"/><rect x="21.79" y="521.03" width="7.05" height="1.5" fill="#404040"/><rect x="29.74" y="521.03" width="2.95" height="1.5" fill="#3b45b5"/><rect x="11.28" y="527.30" width="18.46" height="1.5" fill="#9a9a9a"/><rect x="11.15" y="530.43" width="1.79" height="1.5" fill="#c64600"/><rect x="13.72" y="530.43" width="5.90" height="1.5" fill="#1c71d8"/><rect x="20.77" y="530.43" width="3.08" height="1.5" fill="#404040"/><rect x="21.15" y="533.57" width="8.97" height="1.5" fill="#404040"/><rect x="31.03" y="533.57" width="12.44" height="1.5" fill="#3b45b5"/><rect x="21.15" y="536.70" width="8.97" height="1.5" fill="#404040"/><rect x="31.03" y="536.70" width="11.79" height="1.5" fill="#3b45b5"/><rect x="21.15" y="539.84" width="11.67" height="1.5" fill="#404040"/><rect x="33.72" y="539.84" width="5.64" height="1.5" fill="#404040"/><rect x="39.87" y="539.84" width="6.92" height="1.5" fill="#404040"/><rect x="47.05" y="539.84" width="1.79" height="1.5" fill="#3b45b5"/><rect x="21.15" y="542.97" width="8.97" height="1.5" fill="#404040"/><rect x="31.03" y="542.97" width="11.79" height="1.5" fill="#3b45b5"/><rect x="21.15" y="546.10" width="11.67" height="1.5" fill="#404040"/><rect x="33.72" y="546.10" width="4.49" height="1.5" fill="#404040"/><rect x="38.97" y="546.10" width="7.82" height="1.5" fill="#404040"/><rect x="21.15" y="549.24" width="3.33" height="1.5" fill="#3b45b5"/></svg></div>

  <!-- code -->
  <div id="code" style="top:-34px;left:-102px;width:1248px;height:642px">
<div class="ln" style="top:91.71px">521</div>
<div class="ln" style="top:105.49px">522</div>
<div class="ln" style="top:119.27px">523</div>
<div class="ln" style="top:133.05px">524</div>
<div class="ln" style="top:146.83px">525</div>
<div class="ln" style="top:160.61px">526</div>
<div class="ln" style="top:174.39px">527</div>
<div class="ln" style="top:188.17px">528</div>
<div class="ln" style="top:201.95px">529</div>
<div class="ln" style="top:215.73px">530</div>
<div class="ln" style="top:229.51px">531</div>
<div class="ln" style="top:243.29px">532</div>
<div class="ln" style="top:257.07px">533</div>
<div class="ln" style="top:270.85px">534</div>
<div class="ln" style="top:284.63px">535</div>
<div class="ln" style="top:298.41px">536</div>
<div class="ln" style="top:312.19px">537</div>
<div class="ln" style="top:325.97px">538</div>
<div class="ln" style="top:339.75px">539</div>
<div class="ln" style="top:353.53px">540</div>
<div class="ln" style="top:367.31px">541</div>
<div class="ln" style="top:381.09px">542</div>
<div class="ln" style="top:394.87px">543</div>
<div class="ln" style="top:408.65px">544</div>
<div class="ln" style="top:422.43px">545</div>
<div class="ln" style="top:436.21px">546</div>
<div class="ln" style="top:449.99px">547</div>
<div class="ln" style="top:463.77px">548</div>
<div class="ln" style="top:477.55px">549</div>
<div class="ln" style="top:491.33px">550</div>
<div class="ln" style="top:505.11px">551</div>
<div class="ln" style="top:518.89px">552</div>
<div class="ln" style="top:532.67px">553</div>
<div class="ln" style="top:546.45px">554</div>
<div class="ln" style="top:560.23px">555</div>
<div class="ln" style="top:574.01px">556</div>
<div class="ln" style="top:587.79px">557</div>
<div class="ln" style="top:601.57px">558</div>
<div class="ln" style="top:615.35px">559</div>
<div class="ln" style="top:629.13px">560</div>
<div class="cl" style="top:91.71px"></div>
<div class="cl" style="top:105.49px">g_assert (parser != <span class="n">NULL</span>);</div>
<div class="cl" style="top:119.27px">g_assert (iter != <span class="n">NULL</span>);</div>
<div class="cl" style="top:133.05px"></div>
<div class="cl" style="top:146.83px">{</div>
<div class="cl" style="top:160.61px">  <span class="t">RigAstExpression</span> *expr = <span class="n">NULL</span>;</div>
<div class="cl" style="top:174.39px"></div>
<div class="cl" style="top:188.17px">  <span class="c">/* return [&lt;<u>expr</u>&gt;] ; */</span></div>
<div class="cl" style="top:201.95px">  <span class="k">if</span> (<span class="f">rig_match</span> (iter,</div>
<div class="cl" style="top:215.73px">                 RIG_MATCH_TOKEN (<span class="n">RIG_TOKEN_C_RETURN</span>),</div>
<div class="cl" style="top:229.51px">                 RIG_MATCH_OPTIONAL (RIG_MATCH_EXPRESSION (parser, &amp;expr, <span class="n">0</span>)),</div>
<div class="cl" style="top:243.29px">                 RIG_MATCH_TOKEN (<span class="n">RIG_TOKEN_SEMICOLON</span>),</div>
<div class="cl" style="top:257.07px">                 <span class="n">NULL</span>))</div>
<div class="cl" style="top:270.85px">    <span class="k">return</span> RIG_AST_STATEMENT (<span class="f">rig_ast_return_new</span> (parser-&gt;allocator, expr));</div>
<div class="cl" style="top:284.63px">}</div>
<div class="cl" style="top:298.41px"></div>
<div class="cl" style="top:312.19px">{</div>
<div class="cl" style="top:325.97px">  <span class="t">RigAstExpression</span> *expr = <span class="n">NULL</span>;</div>
<div class="cl" style="top:339.75px"></div>
<div class="cl" style="top:353.53px">  <span class="k">if</span> (<span class="f">rig_match</span> (iter,</div>
<div class="cl" style="top:367.31px">                 RIG_MATCH_EXPRESSION (parser, &amp;expr, <span class="n">0</span>),</div>
<div class="cl" style="top:381.09px">                 RIG_MATCH_TOKEN (<span class="n">RIG_TOKEN_SEMICOLON</span>),</div>
<div class="cl" style="top:394.87px">                 <span class="n">NULL</span>))</div>
<div class="cl" style="top:408.65px">    <span class="k">return</span> RIG_AST_STATEMENT (expr);</div>
<div class="cl" style="top:422.43px">}</div>
<div class="cl" style="top:436.21px"></div>
<div class="cl" style="top:449.99px">{</div>
<div class="cl" style="top:463.77px">  <span class="t">RigAstExpression</span> *condition = <span class="n">NULL</span>;</div>
<div class="cl" style="top:477.55px">  <span class="t">RigAstStatement</span> *if_statement = <span class="n">NULL</span>;</div>
<div class="cl" style="top:491.33px">  <span class="t">RigAstStatement</span> *else_statement = <span class="n">NULL</span>;</div>
<div class="cl" style="top:505.11px"></div>
<div class="cl" style="top:518.89px">  <span class="c">/* if ( &lt;<u>expr</u>&gt; ) &lt;<u>stmt</u>&gt; [else &lt;<u>stmt</u>&gt;] */</span></div>
<div class="cl" style="top:532.67px">  <span class="k">if</span> (<span class="f">rig_match</span> (iter,</div>
<div class="cl" style="top:546.45px">                 RIG_MATCH_TOKEN (<span class="n">RIG_TOKEN_C_IF</span>),</div>
<div class="cl" style="top:560.23px">                 RIG_MATCH_TOKEN (<span class="n">RIG_TOKEN_LPAREN</span>),</div>
<div class="cl" style="top:574.01px">                 RIG_MATCH_EXPRESSION (parser, &amp;condition, <span class="n">0</span>),</div>
<div class="cl" style="top:587.79px">                 RIG_MATCH_TOKEN (<span class="n">RIG_TOKEN_RPAREN</span>),</div>
<div class="cl" style="top:601.57px">                 RIG_MATCH_STATEMENT (parser, &amp;if_statement),</div>
<div class="cl" style="top:615.35px">                 RIG_MATCH_OPTIONAL (</div>
<div class="cl" style="top:629.13px">                   RIG_MATCH_AND (</div>
  </div>

  <!-- status -->
  <div id="status">
    <svg class="abs" style="left:0;top:0" width="20" height="16" viewBox="0 0 20 16"><circle cx="7.5" cy="5" r="1.05" fill="none" stroke="#111" stroke-width="0.9"/><path d="M7.5 6 V12.6" stroke="#111" stroke-width="1.2"/><path d="M7.5 9.2 H11.2 Q11.8 9.2 11.8 8.6 V5.6" fill="none" stroke="#111" stroke-width="1.2"/><path d="M10.3 6.2 L11.8 3.9 L13.3 6.2 Z" fill="#111"/></svg>
    <div class="st" style="left:19px">main</div>
    <div class="vs" style="left:42.7px"></div>
    <svg class="abs" style="left:49.5px;top:4.5px" width="7" height="7" viewBox="0 0 7 7"><circle cx="3.5" cy="3.5" r="3" fill="#111"/><rect x="1.6" y="3" width="3.8" height="1" fill="#fff"/></svg>
    <div class="st" style="left:58.5px">0</div>
    <svg class="abs" style="left:67.6px;top:4.2px" width="9" height="9" viewBox="0 0 9 9"><path d="M3.7 0.2 L7.3 6.8 H0.1 Z" fill="#111" stroke="#111" stroke-width="0.5" stroke-linejoin="round"/><rect x="3.2" y="2.3" width="1" height="2.6" fill="#fff"/><rect x="3.2" y="5.4" width="1" height="0.9" fill="#fff"/></svg>
    <div class="st" style="left:76.5px">0</div>
    <div class="vs" style="left:87.2px"></div>

    <div class="vs" style="left:507.7px"></div>
    <div class="st" style="left:514px;font-size:9px;font-style:italic;font-weight:bold">&#402;</div>
    <div class="st" style="left:518.5px">{}</div>
    <div class="st" style="left:528px;transform:scaleX(0.9)">rig_parser_new</div>
    <div class="vs" style="left:590.7px"></div>
    <svg class="abs" style="left:596.5px;top:3.5px" width="11" height="10" viewBox="0 0 11 10"><path d="M1 1.8 Q1 1 1.8 1 H4 L5 2.2 H9 Q9.8 2.2 9.8 3 V7.8 Q9.8 8.6 9 8.6 H1.8 Q1 8.6 1 7.8 Z" fill="none" stroke="#111" stroke-width="1.2"/><path d="M1 3.4 H9.8" stroke="#111" stroke-width="1"/></svg>
    <div class="vs" style="left:612.7px"></div>
    <div class="st" style="left:628px">Ln 68, Col 3</div>
    <div class="vs" style="left:684.7px"></div>
    <div class="st" style="left:691px">Spaces: 2</div>
    <div class="vs" style="left:730.7px"></div>
    <div class="st" style="left:737px">UTF-8</div>
    <div class="vs" style="left:766.7px"></div>
    <div class="st" style="left:773px">LF</div>
    <div class="vs" style="left:787.7px"></div>
    <div class="st" style="left:794px">C</div>
    <div class="vs" style="left:805.7px"></div>
    <svg class="abs" style="left:816.6px;top:3.6px" width="11" height="10" viewBox="0 0 11 10"><rect x="0.7" y="0.7" width="8.6" height="7.6" rx="1.6" fill="none" stroke="#111" stroke-width="1.3"/><rect x="0.7" y="5" width="8.6" height="1.2" fill="#111"/></svg>
  </div>
  <div id="hl"></div>
</div>
</body></html>
